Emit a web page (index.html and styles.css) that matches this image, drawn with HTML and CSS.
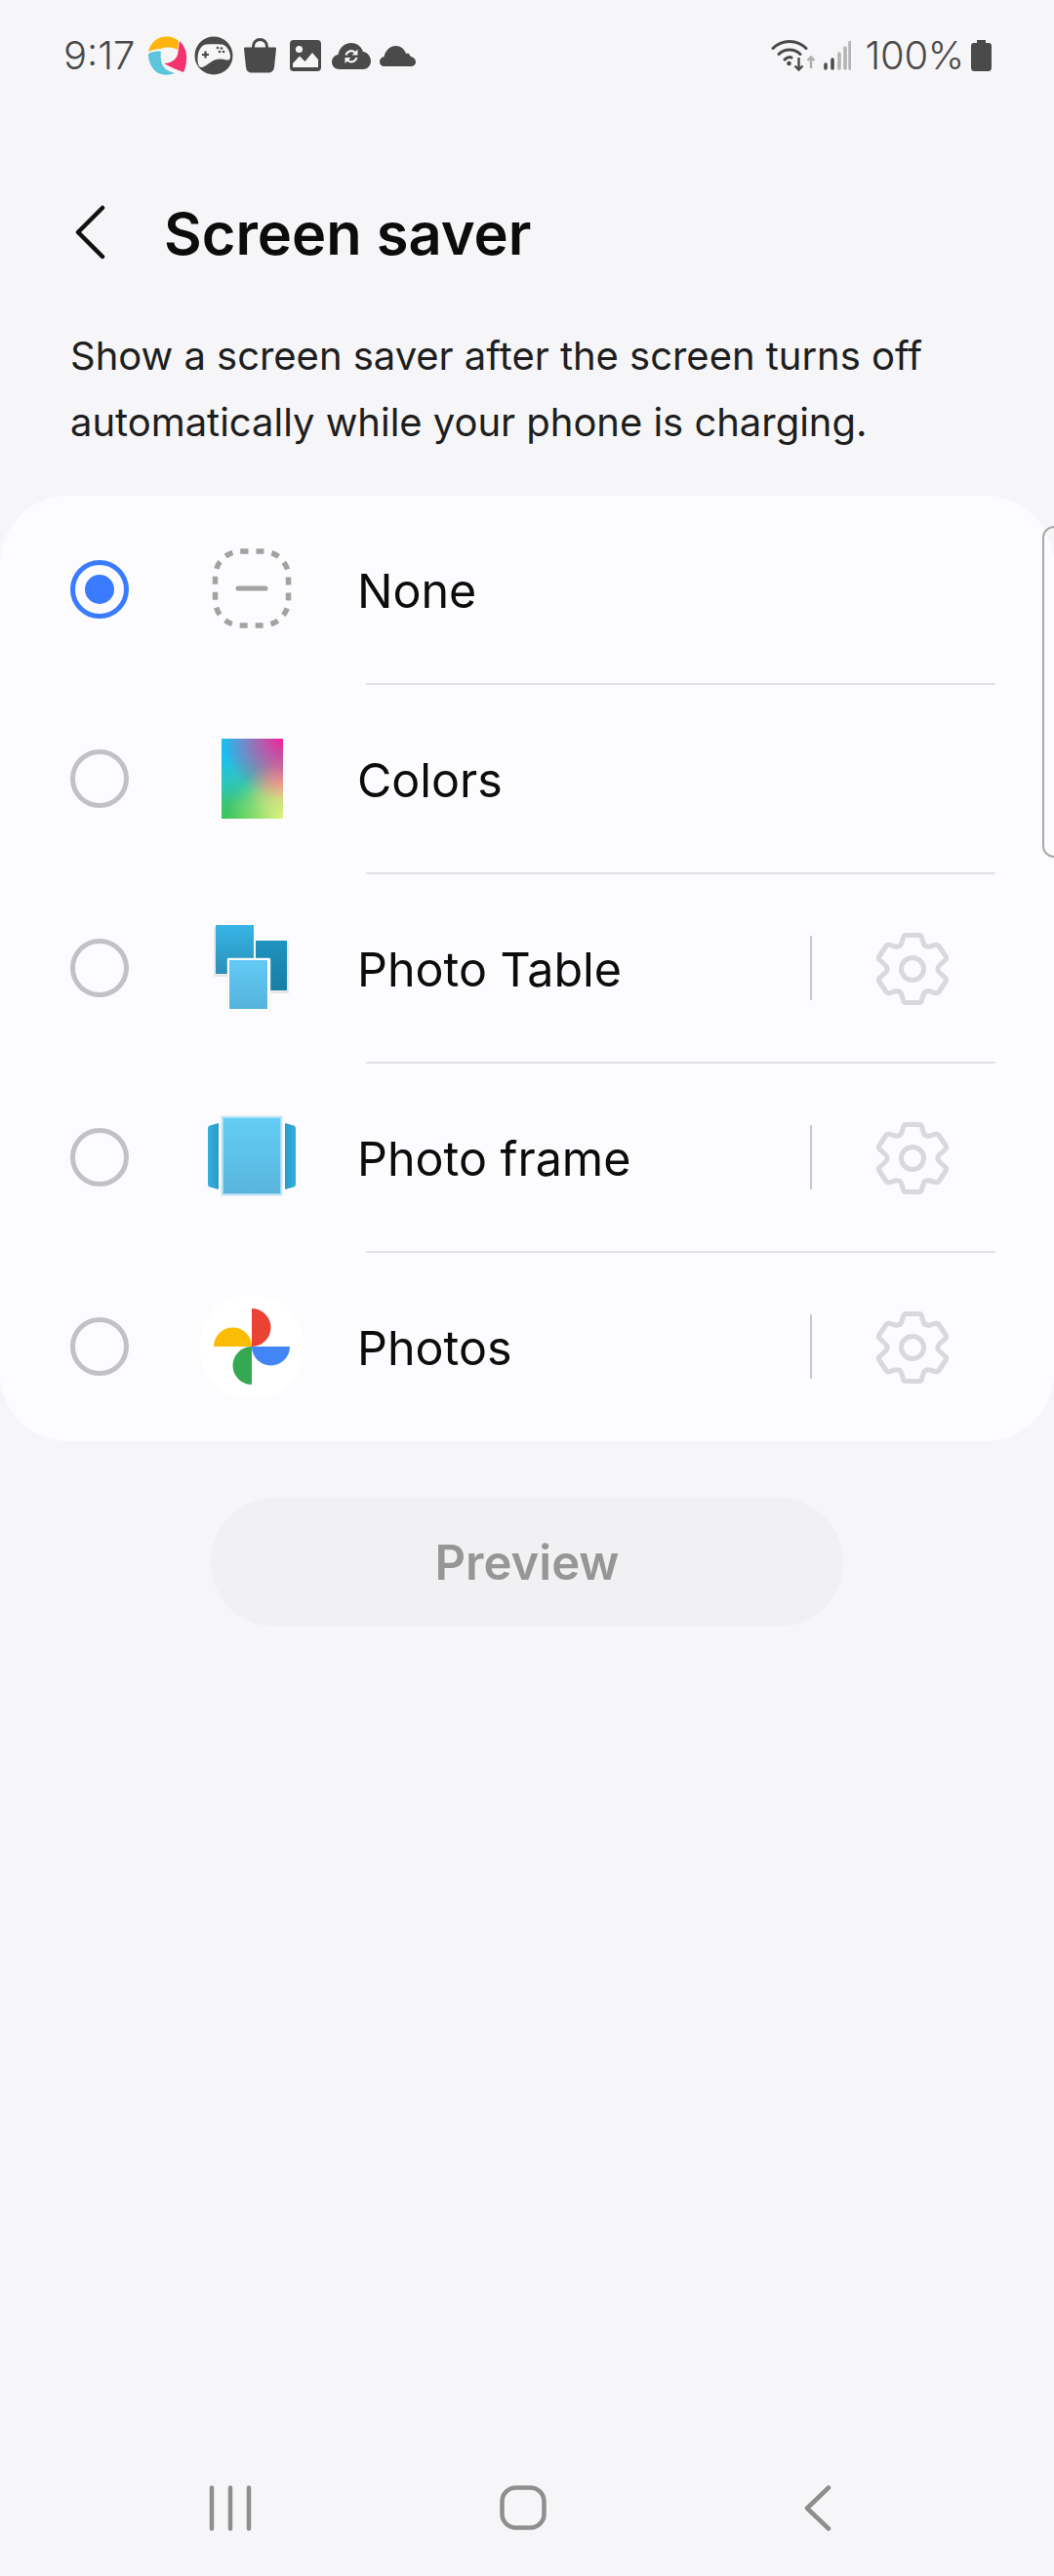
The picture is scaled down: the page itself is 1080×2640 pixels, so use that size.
FILE: index.html
```html
<!DOCTYPE html>
<html lang="en">
<head>
<meta charset="utf-8">
<title>Screen saver</title>
<link rel="stylesheet" href="styles.css">
</head>
<body>
<div class="page">
  <div class="status">
    <div class="status-left">
      <span class="time">9:17</span>
      <svg class="si si-pin" width="40" height="40" viewBox="0 0 40 40">
        <path fill="#ffb30f" d="M0 16C2 7 9 1 17 0.5C23 0 28 2 31 5L30 14C24 11 18 11 13 13C8 13 4 14 0 16Z"/>
        <path fill="#f2336f" d="M32 5C37 10 40 17 39 24C39 29 38 33 36 37C30 35 23 32 16 28C22 28 28 25 30 19C31 14 31 9 32 5Z"/>
        <path fill="#5cc4dc" d="M0 18C4 16 9 15 13 16C12 22 13 30 18 34C21 36 24 37 27 38C22 40 17 40 13 39C5 37 0 28 0 18Z"/>
      </svg>
      <svg class="si si-pad" width="40" height="40" viewBox="0 0 40 40">
        <circle cx="20" cy="20" r="19.5" fill="#4a4a4a"/>
        <path fill="#f6f6f8" d="M3.500 23C3.500 16 7 9 12 8.500C17 8 24 8 28.500 8.500C33 9.500 37 15 37 21C37 24 35.500 25 33 24.500C29 23.500 25 23 21 24.500C16 26.500 12 31 8 32C4.500 32.500 3.500 28 3.500 23Z"/>
        <path stroke="#4a4a4a" stroke-width="2.200" fill="none" d="M8 19H15M11.500 15.500V22.500"/>
        <g fill="#4a4a4a"><circle cx="24" cy="12" r="1.300"/><circle cx="28" cy="12.500" r="1.300"/><circle cx="26" cy="16" r="1.300"/><circle cx="30" cy="16" r="1.300"/></g>
      </svg>
      <svg class="si si-bag" width="33" height="36" viewBox="0 0 33 36">
        <path fill="#4a4a4a" d="M1.500 9.500H31.500C32.500 9.500 33 10 33 11L31 30C30.500 33.500 28.500 35.500 25 35.500H8C4.500 35.500 2.500 33.500 2 30L0 11C0 10 0.500 9.500 1.500 9.500Z"/>
        <path fill="none" stroke="#4a4a4a" stroke-width="3" d="M9.500 11V8.500C9.500 4.500 12.500 1.500 16.500 1.500C20.500 1.500 23.500 4.500 23.500 8.500V11"/>
      </svg>
      <svg class="si si-img" width="32" height="32" viewBox="0 0 32 32">
        <rect width="32" height="32" rx="4" fill="#4a4a4a"/>
        <circle cx="9.500" cy="9.500" r="3.600" fill="#f6f6f8"/>
        <path fill="#f6f6f8" d="M3 28V24L10 16.500L15.500 22L23 13L29 20V28Z"/>
      </svg>
      <svg class="si si-sync" width="40" height="27" viewBox="0 0 40 27">
        <path fill="#4a4a4a" d="M8 27C3 27 0 23.500 0 19.500C0 15.500 3 12.500 6.500 12C7.500 5 13 0 20 0C26 0 30.500 4 32 9C36.500 9.500 40 14 40 18.500C40 23.500 36 27 32 27Z"/>
        <path fill="none" stroke="#f6f6f8" stroke-width="2.200" d="M14.500 12.500C15.500 9 19 7.500 22 8.500L24.500 10.500M25.500 15C24.500 18.500 21 20 18 19L15.500 17"/>
        <path fill="#f6f6f8" d="M26.500 6.500V12.500H20.500ZM13.500 21V15H19.500Z"/>
      </svg>
      <svg class="si si-cloud" width="37" height="21" viewBox="0 0 37 21">
        <path fill="#4a4a4a" d="M5 21C2 21 0 19 0 16C0 13.500 2 11.500 4.500 11C6 4.500 11 0 16.500 0C21.500 0 25.500 3 27 8C28 7.500 29 7.500 30 8C31 10 31.500 10.500 32 11C35 11.500 37 14 37 16.500C37 19 35 21 32 21Z"/>
      </svg>
    </div>
    <div class="status-right">
      <svg class="wifi" width="46" height="34" viewBox="0 0 46 34">
        <g fill="none" stroke="#4a4a4a" stroke-width="3" stroke-linecap="round">
          <path d="M2 9.500C11 0 27 0 36 9.500"/>
          <path d="M8 15.500C14 9.500 24 9.500 30 15.500"/>
          <path d="M14 21C17 18.500 20 18.500 21 19"/>
        </g>
        <circle cx="18.500" cy="25" r="2.300" fill="#4a4a4a"/>
        <path fill="none" stroke="#4a4a4a" stroke-width="2.400" d="M28.500 19V31.500M24.500 27.500L28.500 31.500L32.500 27.500"/>
        <path fill="none" stroke="#aeaeae" stroke-width="2.400" d="M41 30V18.500M37.500 22L41 18.500L44.500 22"/>
      </svg>
      <svg class="signal" width="28" height="30" viewBox="0 0 28 30">
        <g fill="none" stroke-width="3.500" stroke-linecap="round">
          <path stroke="#4a4a4a" d="M2 24V28M9 19V28"/>
          <path stroke="#b4b4b4" d="M16 13V28M22 7V28M27 1.500V28"/>
        </g>
      </svg>
      <span class="pct">100%</span>
      <svg class="batt" width="21" height="32" viewBox="0 0 21 32">
        <path fill="#4a4a4a" d="M6 0H15V3H18C20 3 21 4 21 6V28C21 30.500 20 32 17.500 32H3.500C1 32 0 30.500 0 28V6C0 4 1 3 3 3H6Z"/>
      </svg>
    </div>
  </div>

  <header class="head">
    <svg class="back" width="34" height="56" viewBox="0 0 34 56"><path d="M29 3L4 28L29 53" fill="none" stroke="#111" stroke-width="4.500" stroke-linecap="round" stroke-linejoin="round"/></svg>
    <h1 class="title">Screen saver</h1>
  </header>

  <p class="desc">Show a screen saver after the screen turns off automatically while your phone is charging.</p>

  <main class="card">
    <div class="row">
      <span class="radio on"></span>
      <svg class="ico" width="108" height="108" viewBox="0 0 108 108">
        <rect x="16.500" y="15" width="75" height="76" rx="26" fill="none" stroke="#a2a2a2" stroke-width="5.500" stroke-dasharray="8 8"/>
        <path d="M40 53H68" stroke="#a2a2a2" stroke-width="5" stroke-linecap="round"/>
      </svg>
      <span class="label">None</span>
    </div>
    <hr class="sep">
    <div class="row">
      <span class="radio"></span>
      <span class="ico ico-colors-wrap"><span class="ico-colors"></span></span>
      <span class="label">Colors</span>
    </div>
    <hr class="sep">
    <div class="row">
      <span class="radio"></span>
      <svg class="ico" width="108" height="108" viewBox="0 0 108 108">
        <defs>
          <linearGradient id="t1" x1="0" y1="0" x2="0" y2="1"><stop offset="0" stop-color="#37b5e6"/><stop offset="1" stop-color="#2a8fb8"/></linearGradient>
          <linearGradient id="t2" x1="0" y1="0" x2="0" y2="1"><stop offset="0" stop-color="#1f93bf"/><stop offset="1" stop-color="#177ea6"/></linearGradient>
          <linearGradient id="t3" x1="0" y1="0" x2="0" y2="1"><stop offset="0" stop-color="#62c9f6"/><stop offset="1" stop-color="#55b4dc"/></linearGradient>
        </defs>
        <rect x="15" y="12" width="41" height="51" fill="#e8e8e8"/>
        <rect x="17" y="10" width="39" height="50" fill="url(#t1)"/>
        <rect x="58" y="28" width="34" height="52" fill="#e8e8e8"/>
        <rect x="58" y="26" width="32" height="51" fill="url(#t2)"/>
        <rect x="29" y="44" width="44" height="55" rx="1" fill="#fff" stroke="#e6e6e6" stroke-width="0.500"/>
        <rect x="31" y="46" width="39" height="50" fill="url(#t3)"/>
      </svg>
      <span class="label">Photo Table</span>
      <span class="vbar"></span>
      <svg class="gear" width="74" height="74" viewBox="-37 -37 74 74"><use href="#gear-shape"/></svg>
    </div>
    <hr class="sep">
    <div class="row">
      <span class="radio"></span>
      <svg class="ico" width="108" height="108" viewBox="0 0 108 108">
        <defs>
          <linearGradient id="f1" x1="0" y1="0" x2="0" y2="1"><stop offset="0" stop-color="#63cdf5"/><stop offset="1" stop-color="#58b5dd"/></linearGradient>
          <linearGradient id="f2" x1="0" y1="0" x2="1" y2="0"><stop offset="0" stop-color="#35b0e0"/><stop offset="1" stop-color="#2a9bc8"/></linearGradient>
          <linearGradient id="f3" x1="1" y1="0" x2="0" y2="0"><stop offset="0" stop-color="#35b0e0"/><stop offset="1" stop-color="#2a9bc8"/></linearGradient>
        </defs>
        <path d="M9 24Q9 22 11 21.500L20 19V87L11 84.500Q9 84 9 82Z" fill="url(#f2)"/>
        <path d="M99 24Q99 22 97 21.500L88 19V87L97 84.500Q99 84 99 82Z" fill="url(#f3)"/>
        <rect x="22" y="11" width="64" height="83" fill="#e6eef2"/>
        <rect x="24" y="13" width="60" height="79" fill="url(#f1)" stroke="#b9e5f7" stroke-width="1.500"/>
      </svg>
      <span class="label">Photo frame</span>
      <span class="vbar"></span>
      <svg class="gear" width="74" height="74" viewBox="-37 -37 74 74"><use href="#gear-shape"/></svg>
    </div>
    <hr class="sep">
    <div class="row">
      <span class="radio"></span>
      <svg class="ico" width="108" height="108" viewBox="0 0 108 108">
        <path fill="#fff" d="M54 1C86 1 107 22 107 54C107 86 86 107 54 107C22 107 1 86 1 54C1 22 22 1 54 1Z"/>
        <path fill="#ea4335" d="M54 15A19.500 19.500 0 0 1 54 54Z"/>
        <path fill="#4285f4" d="M54 54H93A19.500 19.500 0 0 1 54 54Z"/>
        <path fill="#34a853" d="M54 54V93A19.500 19.500 0 0 1 54 54Z"/>
        <path fill="#fbbc04" d="M54 54H15A19.500 19.500 0 0 1 54 54Z"/>
      </svg>
      <span class="label">Photos</span>
      <span class="vbar"></span>
      <svg class="gear" width="74" height="74" viewBox="-37 -37 74 74"><use href="#gear-shape"/></svg>
    </div>
  </main>

  <div class="handle"></div>

  <div class="actions"><button class="preview" type="button">Preview</button></div>

  <nav class="nav">
    <svg width="44" height="47" viewBox="0 0 44 47"><path d="M3 2.500V44.500M22 2.500V44.500M41 2.500V44.500" fill="none" stroke="#8e8e8e" stroke-width="4.500" stroke-linecap="round"/></svg>
    <svg class="nav-home" width="48" height="46" viewBox="0 0 48 46"><rect x="2.500" y="2.500" width="43" height="41" rx="14" fill="none" stroke="#8e8e8e" stroke-width="4.500"/></svg>
    <svg width="28" height="47" viewBox="0 0 28 47"><path d="M25 2.500L3 23.500L25 44.500" fill="none" stroke="#8e8e8e" stroke-width="4.500" stroke-linecap="round" stroke-linejoin="round"/></svg>
  </nav>
</div>

<svg class="defs" width="0" height="0">
  <defs>
    <g id="gear-shape" fill="none" stroke="#d9d9db" stroke-width="5" stroke-linejoin="round">
      <path d="M-7 -34.500H7Q9 -34.500 9.500 -32L11 -27Q12 -22 18 -23L24 -24.800Q26 -25 27 -23.500L34 -13Q35.500 -11 34 -9.500L28 -4Q23.500 0 28 4L34 9.500Q35.500 11 34 13L27 23.500Q26 25 24 24.800L18 23Q12 22 11 27L9.500 32Q9 34.500 7 34.500H-7Q-9 34.500 -9.500 32L-11 27Q-12 22 -18 23L-24 24.800Q-26 25 -27 23.500L-34 13Q-35.500 11 -34 9.500L-28 4Q-23.500 0 -28 -4L-34 -9.500Q-35.500 -11 -34 -13L-27 -23.500Q-26 -25 -24 -24.800L-18 -23Q-12 -22 -11 -27L-9.500 -32Q-9 -34.500 -7 -34.500Z"/>
      <circle r="11.500"/>
    </g>
  </defs>
</svg>
</body>
</html>
```
FILE: styles.css
```css
* { box-sizing: border-box; }
html, body { margin: 0; padding: 0; background: #f6f6f8; }
body { font-family: "Inter", "Roboto", "Liberation Sans", sans-serif; color: #111; }
.page { position: relative; width: 1080px; height: 2640px; display: flex; flex-direction: column; overflow: hidden; }

.status { height: 112px; padding: 37px 64px 0 65px; display: flex; justify-content: space-between; align-items: flex-start; color: #4a4a4a; }
.status-left, .status-right { display: flex; align-items: center; height: 40px; }
.time { font-size: 40px; line-height: 40px; font-weight: 300; width: 87px; }
.si-pad { margin-left: 7px; }
.si-bag { margin-left: 11px; }
.si-img { margin-left: 14px; }
.si-sync { margin-left: 11px; }
.si-cloud { margin-left: 9px; }
.wifi { margin-right: 8px; }
.signal { margin-right: 15px; }
.pct { font-size: 40px; line-height: 40px; font-weight: 300; margin-right: 7px; letter-spacing: -0.3px; }

.head { height: 106px; margin-top: 74px; padding: 0 0 0 76px; display: flex; align-items: center; }
.back { flex: none; margin-bottom: 2px; }
.title { margin: 0 0 0 58px; font-size: 59.6px; line-height: 70px; font-weight: 600; color: #0c0c0c; }

.desc { margin: 39px 72px 0; width: 900px; font-size: 40px; line-height: 68px; color: #1e1e1e; letter-spacing: -0.03px; }

.card { margin-top: 41px; height: 969px; background: #fcfcfe; border-radius: 70px; display: flex; flex-direction: column; }
.row { height: 192px; flex: none; display: flex; align-items: center; padding-left: 72px; }
.radio { flex: none; width: 60px; height: 60px; border-radius: 50%; border: 5px solid #c2c2c4; display: block; }
.radio.on { border-color: #3a7bff; position: relative; }
.radio.on::after { content: ""; position: absolute; left: 10px; top: 10px; width: 30px; height: 30px; border-radius: 50%; background: #3a7bff; }
.ico { flex: none; margin-left: 72px; display: block; }
.ico-colors-wrap { width: 108px; height: 108px; display: flex; align-items: center; justify-content: center; }
.ico-colors { display: block; width: 63px; height: 82px; background:
  radial-gradient(circle at 100% 0, #f7209a 0, rgba(247,32,154,0) 60%),
  radial-gradient(circle at 0 15%, #16bdf4 0, rgba(22,189,244,0) 60%),
  radial-gradient(circle at 100% 100%, #e0f57e 0, rgba(224,245,126,0) 55%),
  radial-gradient(circle at 100% 60%, #fca48c 0, rgba(252,164,140,0) 45%),
  linear-gradient(#40cfd6, #3cc45c); }
.label { margin-left: 54px; padding-top: 3px; font-size: 48.4px; line-height: 60px; color: #0c0c0c; flex: 1; }
.vbar { flex: none; width: 2px; height: 66px; background: #c8c8ca; }
.gear { flex: none; margin: 2px 108px 0 66px; display: block; }
.sep { height: 2px; border: 0; margin: 0 60px 0 375px; background: #e2e2e4; flex: none; }

.handle { position: absolute; right: -14px; top: 539px; width: 26px; height: 340px; border: 2px solid #a8a8a8; border-radius: 12px; }

.actions { margin-top: 58px; display: flex; justify-content: center; }
.preview { width: 648px; height: 132px; border: 0; border-radius: 66px; background: #f1f1f3; color: #969696; font-family: inherit; font-size: 49px; font-weight: 600; }

.nav { margin-top: auto; height: 93px; padding: 0 228px 46px 214px; display: flex; justify-content: space-between; align-items: flex-start; }
.nav-home { margin-right: 10px; }
.defs { position: absolute; }
```
